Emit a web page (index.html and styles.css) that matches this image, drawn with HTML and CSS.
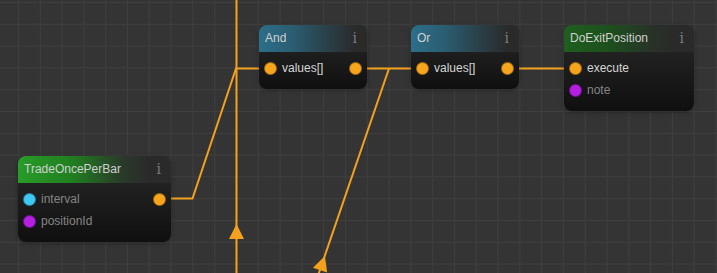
FILE: index.html
```html
<!DOCTYPE html>
<html lang="en">
<head>
  <meta charset="UTF-8" />
  <title>Graph editor</title>
  <link rel="stylesheet" href="styles.css">
</head>
<body>
  <div class="canvas">
    <!-- links between slots -->
    <svg class="links" width="717" height="273" viewBox="0 0 717 273">
      <g class="wire">
        <line x1="236.5" y1="0" x2="236.5" y2="273" />
        <polyline points="166,198.5 192.5,198.5 236,68.5 264,68.5" />
        <polyline points="362,68.5 416,68.5" />
        <line x1="389" y1="68.5" x2="316.5" y2="280" />
        <polyline points="515,68.5 569,68.5" />
      </g>
      <g class="arrow">
        <polygon transform="translate(236.5,231.5)" points="0,-7.5 -7.5,7.5 7.5,7.5" />
        <polygon transform="translate(322.5,263) rotate(18.9)" points="0,-7.5 -7.5,7.5 7.5,7.5" />
      </g>
    </svg>

    <div class="node node-trade">
      <div class="node-title title-green">
        <span>TradeOncePerBar</span><span class="info">i</span>
      </div>
      <div class="node-body">
        <div class="slot">
          <span class="dot dot-cyan"></span><span class="label dim">interval</span>
          <span class="dot dot-orange out"></span>
        </div>
        <div class="slot">
          <span class="dot dot-purple"></span><span class="label dim">positionId</span>
        </div>
      </div>
    </div>

    <div class="node node-and">
      <div class="node-title title-blue">
        <span>And</span><span class="info">i</span>
      </div>
      <div class="node-body">
        <div class="slot">
          <span class="dot dot-orange"></span><span class="label">values[]</span>
          <span class="dot dot-orange out"></span>
        </div>
      </div>
    </div>

    <div class="node node-or">
      <div class="node-title title-blue">
        <span>Or</span><span class="info">i</span>
      </div>
      <div class="node-body">
        <div class="slot">
          <span class="dot dot-orange"></span><span class="label">values[]</span>
          <span class="dot dot-orange out"></span>
        </div>
      </div>
    </div>

    <div class="node node-exit">
      <div class="node-title title-darkgreen">
        <span>DoExitPosition</span><span class="info">i</span>
      </div>
      <div class="node-body">
        <div class="slot">
          <span class="dot dot-orange"></span><span class="label">execute</span>
        </div>
        <div class="slot">
          <span class="dot dot-purple"></span><span class="label dim">note</span>
        </div>
      </div>
    </div>
  </div>
</body>
</html>
```

FILE: styles.css
```css
* {
  margin: 0;
  padding: 0;
  box-sizing: border-box;
}

body {
  width: 717px;
  height: 273px;
  overflow: hidden;
  font-family: 'Liberation Sans', Arial, sans-serif;
  background: #343434;
}

.canvas {
  position: relative;
  width: 717px;
  height: 273px;
  background-color: #343434;
  background-image:
    linear-gradient(to right, #3f3f3f 1px, transparent 1px),
    linear-gradient(to bottom, #3f3f3f 1px, transparent 1px);
  background-size: 21.8px 21.8px;
  background-position: 18px 2px;
}

svg.links {
  position: absolute;
  top: 0;
  left: 0;
  z-index: 0;
}

.wire line, .wire polyline {
  fill: none;
  stroke: #f4a11e;
  stroke-width: 2;
}

.arrow polygon {
  fill: #f4a11e;
}

/* nodes */
.node {
  position: absolute;
  z-index: 1;
  border-radius: 8px;
  overflow: hidden;
  background: linear-gradient(#2a2a2a, #0f0f0f);
  box-shadow: 0 1px 4px rgba(0, 0, 0, 0.35);
}

.node-trade { left: 18px; top: 156px; width: 153px; height: 86px; }
.node-and { left: 259px; top: 25px; width: 108px; height: 64px; }
.node-or { left: 411px; top: 25px; width: 108px; height: 64px; }
.node-exit { left: 564px; top: 25px; width: 130px; height: 86px; }

.node-title {
  height: 27px;
  display: flex;
  align-items: center;
  justify-content: space-between;
  padding: 0 10px 1px 6px;
  font-size: 12px;
  color: #d0d0d0;
}

.title-green {
  background: linear-gradient(to right, #289c28 0%, #207f20 35%, #2a3a2a 68%, #2a2a2a 85%);
}

.title-darkgreen {
  background: linear-gradient(to right, #1f5f1f 0%, #1d4f1d 35%, #283228 68%, #2a2a2a 85%);
}

.title-blue {
  background: linear-gradient(to right, #2d6e89 0%, #2a5e73 30%, #2a3a40 70%, #2a2a2a 90%);
}

.info {
  font-family: 'DejaVu Serif', 'Liberation Serif', serif;
  font-size: 14px;
  color: #7a7a7a;
}

.node-body {
  padding: 5px 0 10px;
}

.slot {
  height: 22px;
  display: flex;
  align-items: center;
  padding: 0 5px;
}

.dot {
  width: 13px;
  height: 13px;
  border-radius: 50%;
  flex: none;
  border: 1px solid rgba(0, 0, 0, 0.35);
}

.dot.out {
  margin-left: auto;
}

.dot-orange { background: #f7a51c; }
.dot-cyan { background: #3ec8f4; }
.dot-purple { background: #b41fe2; }

.label {
  margin-left: 5px;
  font-size: 12px;
  color: #d6d6d6;
}

.label.dim {
  color: #858585;
}
```
